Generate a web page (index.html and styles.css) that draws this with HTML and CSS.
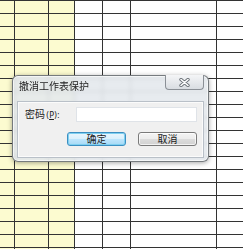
FILE: index.html
```html
<!DOCTYPE html>
<html lang="zh-CN">
<head>
    <meta charset="UTF-8">
    <meta name="viewport" content="width=device-width, initial-scale=1.0">
    <title>撤消工作表保护</title>
    <link rel="stylesheet" href="styles.css">
</head>
<body>
    <div class="sheet">
        <div class="cell hl"></div><div class="cell hl"></div><div class="cell hl"></div><div class="cell"></div><div class="cell"></div><div class="cell"></div><div class="cell"></div>
        <div class="cell hl"></div><div class="cell hl"></div><div class="cell hl"></div><div class="cell"></div><div class="cell"></div><div class="cell"></div><div class="cell"></div>
        <div class="cell hl"></div><div class="cell hl"></div><div class="cell hl"></div><div class="cell"></div><div class="cell"></div><div class="cell"></div><div class="cell"></div>
        <div class="cell hl"></div><div class="cell hl"></div><div class="cell hl"></div><div class="cell"></div><div class="cell"></div><div class="cell"></div><div class="cell"></div>
        <div class="cell hl"></div><div class="cell hl"></div><div class="cell hl"></div><div class="cell"></div><div class="cell"></div><div class="cell"></div><div class="cell"></div>
        <div class="cell hl"></div><div class="cell hl"></div><div class="cell hl"></div><div class="cell"></div><div class="cell"></div><div class="cell"></div><div class="cell"></div>
        <div class="cell hl"></div><div class="cell hl"></div><div class="cell hl"></div><div class="cell"></div><div class="cell"></div><div class="cell"></div><div class="cell"></div>
        <div class="cell hl"></div><div class="cell hl"></div><div class="cell hl"></div><div class="cell"></div><div class="cell"></div><div class="cell"></div><div class="cell"></div>
        <div class="cell hl"></div><div class="cell hl"></div><div class="cell hl"></div><div class="cell"></div><div class="cell"></div><div class="cell"></div><div class="cell"></div>
        <div class="cell hl"></div><div class="cell hl"></div><div class="cell hl"></div><div class="cell"></div><div class="cell"></div><div class="cell"></div><div class="cell"></div>
        <div class="cell hl"></div><div class="cell hl"></div><div class="cell hl"></div><div class="cell"></div><div class="cell"></div><div class="cell"></div><div class="cell"></div>
        <div class="cell hl"></div><div class="cell hl"></div><div class="cell hl"></div><div class="cell"></div><div class="cell"></div><div class="cell"></div><div class="cell"></div>
        <div class="cell hl"></div><div class="cell hl"></div><div class="cell hl"></div><div class="cell"></div><div class="cell"></div><div class="cell"></div><div class="cell"></div>
        <div class="cell hl"></div><div class="cell hl"></div><div class="cell hl"></div><div class="cell"></div><div class="cell"></div><div class="cell"></div><div class="cell"></div>
        <div class="cell hl"></div><div class="cell hl"></div><div class="cell hl"></div><div class="cell"></div><div class="cell"></div><div class="cell"></div><div class="cell"></div>
        <div class="cell hl"></div><div class="cell hl"></div><div class="cell hl"></div><div class="cell"></div><div class="cell"></div><div class="cell"></div><div class="cell"></div>
        <div class="cell hl"></div><div class="cell hl"></div><div class="cell hl"></div><div class="cell"></div><div class="cell"></div><div class="cell"></div><div class="cell"></div>
        <div class="cell hl"></div><div class="cell hl"></div><div class="cell hl"></div><div class="cell"></div><div class="cell"></div><div class="cell"></div><div class="cell"></div>
        <div class="cell hl"></div><div class="cell hl"></div><div class="cell hl"></div><div class="cell"></div><div class="cell"></div><div class="cell"></div><div class="cell"></div>
        <div class="cell hl"></div><div class="cell hl"></div><div class="cell hl"></div><div class="cell"></div><div class="cell"></div><div class="cell"></div><div class="cell"></div>
    </div>

    <div class="dialog">
        <div class="titlebar">
            <span class="title">撤消工作表保护</span>
            <button type="button" class="close">
                <svg width="11" height="9" viewBox="0 0 11 9">
                    <path d="M2 1.5 L9 7.5 M9 1.5 L2 7.5" stroke="#6d7379" stroke-width="3.4" stroke-linecap="round"/>
                    <path d="M2 1.5 L9 7.5 M9 1.5 L2 7.5" stroke="#ffffff" stroke-width="1.6" stroke-linecap="round"/>
                </svg>
            </button>
        </div>
        <div class="panel">
            <div class="field">
                <label for="pwd">密码<span class="key">(<u>P</u>):</span></label>
                <input type="password" id="pwd" class="pwd">
            </div>
            <div class="actions">
                <button type="button" class="btn default">确定</button>
                <button type="button" class="btn">取消</button>
            </div>
        </div>
    </div>
</body>
</html>
```

FILE: styles.css
```css
body {
    margin: 0;
    width: 243px;
    height: 249px;
    overflow: hidden;
    background: #fff;
    font-family: "Noto Sans CJK SC", "Noto Sans", sans-serif;
    position: relative;
}
.sheet {
    display: grid;
    grid-template-columns: 14px 33px 25px 27px 27px 85px 1fr;
    grid-auto-rows: 12px;
    gap: 1px;
    padding-top: 1px;
    background: #333;
}
.cell {
    background: #fff;
}
.cell.hl {
    background: #fcfbd0;
}
.dialog {
    position: absolute;
    left: 12px;
    top: 75px;
    width: 197px;
    height: 87px;
    box-sizing: border-box;
    border: 1px solid rgba(70, 75, 80, 0.7);
    border-radius: 6px;
    background: rgba(228, 232, 237, 0.88);
    backdrop-filter: blur(2px);
    box-shadow: 0 1px 5px rgba(0, 0, 0, 0.35), inset 0 0 0 1px rgba(255, 255, 255, 0.6);
    display: flex;
    flex-direction: column;
}
.titlebar {
    display: flex;
    height: 25px;
    padding: 0 4px 0 6px;
}
.title {
    font-size: 10px;
    line-height: 12px;
    margin-top: 4px;
    color: #222;
}
.close {
    margin-left: auto;
    width: 39px;
    height: 15px;
    margin-top: -1px;
    padding: 0;
    border: 1px solid #8b9096;
    border-top: none;
    border-radius: 0 0 4px 4px;
    background: linear-gradient(#f4f5f7, #d9dde2);
    display: flex;
    align-items: center;
    justify-content: center;
}
.panel {
    flex: 1;
    margin: 0 4px 3px 4px;
    background: #f0f0f0;
    border: 1px solid #b9c0c8;
    box-shadow: inset 0 0 0 1px #fbfbfb;
}
.field {
    display: flex;
    align-items: center;
    padding: 5px 6px 0 7px;
}
.field label {
    flex: none;
    width: 51px;
    font-size: 10px;
    line-height: 12px;
    color: #222;
    white-space: nowrap;
}
.key {
    font-family: "DejaVu Sans", sans-serif;
    font-size: 8px;
    margin-left: 1px;
}
.pwd {
    flex: 1;
    min-width: 0;
    width: 0;
    height: 15px;
    box-sizing: border-box;
    margin: 0;
    border: 1px solid #dfe3e8;
    background: #fff;
    padding: 0 2px;
}
.actions {
    display: flex;
    justify-content: flex-end;
    gap: 12px;
    padding: 10px 6px 0 0;
}
.btn {
    width: 59px;
    height: 14px;
    padding: 0;
    font-family: "Noto Sans CJK SC", sans-serif;
    font-size: 10px;
    line-height: 12px;
    color: #222;
    border: 1px solid #7a7a7a;
    border-radius: 3px;
    background: linear-gradient(#f4f4f4 0%, #ececec 50%, #dcdcdc 51%, #d2d2d2 100%);
    box-shadow: inset 0 0 0 1px rgba(255, 255, 255, 0.7);
}
.btn.default {
    border-color: #3c8fc2;
    background: linear-gradient(#eaf6fd 0%, #d9f0fc 50%, #bee6fd 51%, #a7d9f5 100%);
    box-shadow: inset 0 0 0 1px #7fd0f0;
}
```
